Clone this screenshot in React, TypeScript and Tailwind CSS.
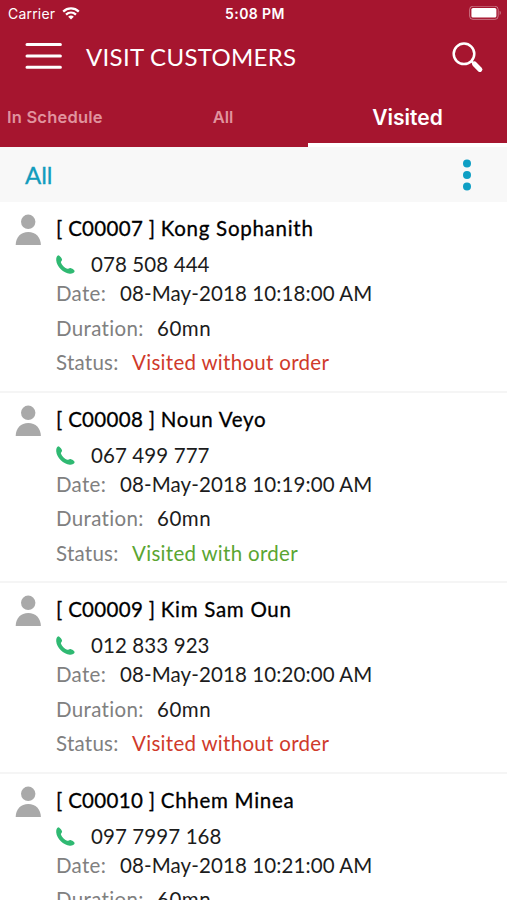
import React from 'react';

type VisitStatus = 'WITH_ORDER' | 'WITHOUT_ORDER';

interface Visit {
    code: string;
    name: string;
    phone: string;
    date: string;
    duration: string;
    status: VisitStatus;
}

const VISITS: Visit[] = [
    { code: 'C00007', name: 'Kong Sophanith', phone: '078 508 444', date: '08-May-2018 10:18:00 AM', duration: '60mn', status: 'WITHOUT_ORDER' },
    { code: 'C00008', name: 'Noun Veyo', phone: '067 499 777', date: '08-May-2018 10:19:00 AM', duration: '60mn', status: 'WITH_ORDER' },
    { code: 'C00009', name: 'Kim Sam Oun', phone: '012 833 923', date: '08-May-2018 10:20:00 AM', duration: '60mn', status: 'WITHOUT_ORDER' },
    { code: 'C00010', name: 'Chhem Minea', phone: '097 7997 168', date: '08-May-2018 10:21:00 AM', duration: '60mn', status: 'WITHOUT_ORDER' }
];

const WifiIcon: React.FC = () => (
    <svg width="18" height="13" viewBox="0 0 18 13" fill="none" stroke="#fff" strokeWidth="2.3">
        <path d="M1.2 4.6C5.6 .4 12.4 .4 16.8 4.6" />
        <path d="M4 7.6c2.9-2.7 7.1-2.7 10 0" />
        <path d="M9 12.4 6.2 9.7c1.6-1.5 4-1.5 5.6 0z" fill="#fff" stroke="none" />
    </svg>
);

const BatteryIcon: React.FC = () => (
    <svg width="33" height="15" viewBox="0 0 33 15">
        <rect x=".6" y=".2" width="28.6" height="13.2" rx="3.4" fill="none" stroke="#fff" strokeOpacity=".4" />
        <rect x="2.4" y="2" width="25" height="9.6" rx="1.6" fill="#fff" />
        <path d="M30.6 4.7c1.7.7 1.7 3.6 0 4.3z" fill="#fff" fillOpacity=".4" />
    </svg>
);

const MenuIcon: React.FC = () => (
    <svg width="38" height="28" viewBox="0 0 38 28" stroke="#fff" strokeWidth="3" strokeLinecap="round">
        <path d="M3 1.600h33.400M3 13h33.400M3 24.300h33.400" />
    </svg>
);

const SearchIcon: React.FC = () => (
    <svg width="33" height="34" viewBox="0 0 33 34" fill="none" stroke="#fff">
        <circle cx="13" cy="13.800" r="10.300" strokeWidth="2.500" />
        <path d="m20.200 21 2.500 2.500" strokeWidth="2.400" />
        <path d="m23.500 23.900 5.400 5.500" strokeWidth="5" strokeLinecap="round" />
    </svg>
);

const PersonIcon: React.FC = () => (
    <svg width="26" height="32" viewBox="0 0 26 32" fill="#a9a9a9">
        <circle cx="13.2" cy="7.8" r="7.2" />
        <path d="M.7 30.9C.7 23.3 5.900 18 13.300 18s12.400 5.300 12.600 12.900z" />
    </svg>
);

const PhoneIcon: React.FC = () => (
    <svg width="20" height="20" viewBox="0 0 20 20">
        <path d="M2.200 1.200C3.600 1.400 6.200 4.300 6.100 5.700 6 6.900 4.500 7.500 5 8.800c.9 2.500 3.400 5 6.100 5.900 1.300.4 1.900-1 3.300-.8 1.700.3 3.500 1.500 4.300 3-.4 1.700-2.300 2.900-4.800 2.800C7.500 19.200.700 12.800.2 6.300.1 3.800.8 1.700 2.200 1.200z" fill="#2fb972" />
    </svg>
);

const VisitRow: React.FC<{ visit: Visit }> = ({ visit }) => (
    <li className="flex h-[190.6px] border-b-2 border-[#f5f5f5] pl-[15px]">
        <div className="w-[41px] shrink-0 pt-3">
            <PersonIcon />
        </div>
        <div className="text-[20.5px] leading-[34px] whitespace-nowrap text-[#1c1c1c]">
            <div className="h-[37px] pt-[9px] text-black [-webkit-text-stroke:0.3px_#000]">
                <span className="tracking-[0.3px]">[ {visit.code} ] </span>
                <span className="tracking-[0.72px]">{visit.name}</span>
            </div>
            <div className="mt-[8px] flex h-[34px] items-center">
                <PhoneIcon />
                <span className="ml-[15px] tracking-[0.1px]">{visit.phone}</span>
            </div>
            <div className="-mt-[5px] flex">
                <span className="w-[64px] tracking-[0.3px] text-[#808080]">Date:</span>
                <span className="tracking-[0.1px]">{visit.date}</span>
            </div>
            <div className="mt-[0.6px] flex">
                <span className="w-[101px] tracking-[0.35px] text-[#808080]">Duration:</span>
                <span className="tracking-[0.5px]">{visit.duration}</span>
            </div>
            <div className="mt-[0.6px] flex">
                <span className="w-[76px] tracking-[0.25px] text-[#808080]">Status:</span>
                {visit.status === 'WITH_ORDER' ? (
                    <span className="tracking-[0.3px] text-[#5aa532]">Visited with order</span>
                ) : (
                    <span className="tracking-[0.3px] text-[#cf3a2b]">Visited without order</span>
                )}
            </div>
        </div>
    </li>
);

const App: React.FC = () => {
    return (
        <div className="h-[900px] w-[507px] overflow-hidden bg-white font-['Lato',sans-serif]">
            <header className="h-[147px] bg-[#a6152f] text-white">
                {/* Status bar */}
                <div className="grid h-[27px] grid-cols-3 items-center pr-[5px] pl-2 font-['Inter',sans-serif] text-[14px]">
                    <div className="flex items-center gap-[7px]">
                        <span className="tracking-[0.2px]">Carrier</span>
                        <WifiIcon />
                    </div>
                    <span className="text-center font-semibold tracking-[0.4px]">5:08 PM</span>
                    <div className="flex justify-end">
                        <BatteryIcon />
                    </div>
                </div>

                {/* Title bar */}
                <div className="flex h-[59px] items-center pr-[23px] pl-[24px]">
                    <MenuIcon />
                    <h1 className="ml-[24px] flex-1 text-[24px] tracking-[0.3px] whitespace-nowrap">VISIT CUSTOMERS</h1>
                    <SearchIcon />
                </div>

                {/* Tabs */}
                <nav className="flex h-[61px] font-['Inter',sans-serif] whitespace-nowrap">
                    <div className="w-[138px] pt-[19px] pl-[7px] text-[16.5px] font-semibold tracking-[0.2px] text-[#e0939e]">In Schedule</div>
                    <div className="w-[170px] pt-[19px] text-center text-[16.5px] font-semibold text-[#e0939e]">All</div>
                    <div className="w-[199px] border-b-[4px] border-white pt-[16px] text-center text-[21px] font-semibold">Visited</div>
                </nav>
            </header>

            {/* Filter */}
            <div className="flex h-[55px] items-center justify-between bg-[#f8f8f8] pr-[35px] pl-[25px]">
                <span className="text-[24px] text-[#129cbd] [-webkit-text-stroke:0.3px_#129cbd]">All</span>
                <svg width="10" height="32" viewBox="0 0 10 32" fill="#0f9fc4">
                    <circle cx="5" cy="4.500" r="4" />
                    <circle cx="5" cy="16" r="4" />
                    <circle cx="5" cy="27.500" r="4" />
                </svg>
            </div>

            <ul>
                {VISITS.map(visit => (
                    <VisitRow key={visit.code} visit={visit} />
                ))}
            </ul>
        </div>
    );
};

export default App;
